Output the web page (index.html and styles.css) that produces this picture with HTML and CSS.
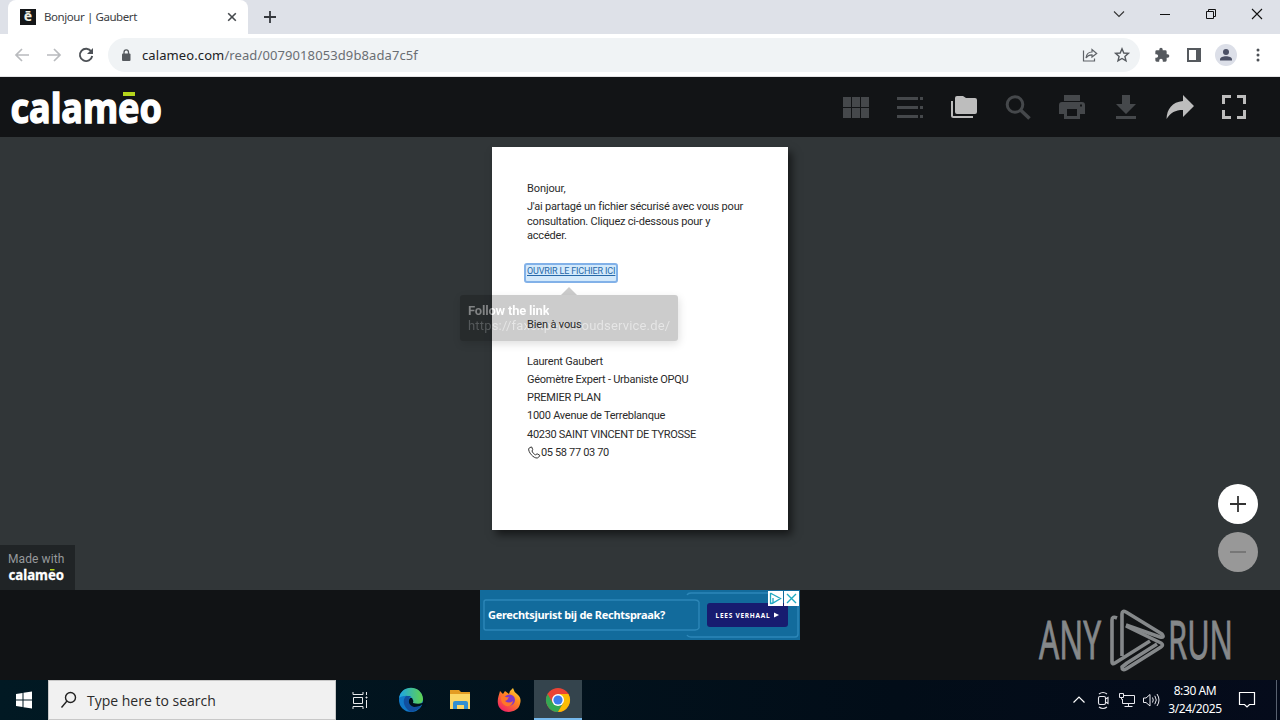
FILE: index.html
```html
<!DOCTYPE html>
<html lang="fr">
<head>
<meta charset="utf-8">
<title>Bonjour | Gaubert</title>
<link rel="stylesheet" href="styles.css">
</head>
<body>
<header class="tabstrip">
  <div class="tab">
    <span class="favicon">ē</span>
    <span class="tab-title">Bonjour | Gaubert</span>
    <svg class="tab-close" width="10" height="10" viewBox="0 0 10 10"><path d="M1.2 1.2l7.6 7.6M8.8 1.2L1.2 8.8" stroke="#45494d" stroke-width="1.6"/></svg>
  </div>
  <svg class="new-tab" width="12" height="12" viewBox="0 0 12 12"><path d="M6 0v12M0 6h12" stroke="#35383d" stroke-width="1.8"/></svg>
  <div class="window-buttons">
    <svg width="46" height="28" viewBox="0 0 46 28"><path d="M18 11.500l5 5 5-5" fill="none" stroke="#333" stroke-width="1.1"/></svg>
    <svg width="46" height="28" viewBox="0 0 46 28"><path d="M18 14.500h10" stroke="#111"/></svg>
    <svg width="46" height="28" viewBox="0 0 46 28"><path d="M18.500 11.500h7v7h-7zM20.500 11.500v-2h7v7h-2" fill="none" stroke="#111"/></svg>
    <svg width="46" height="28" viewBox="0 0 46 28"><path d="M18 9l10 10M28 9L18 19" stroke="#111" stroke-width="1.1"/></svg>
  </div>
</header>
<nav class="toolbar">
  <div class="nav-icons">
    <svg width="16" height="16" viewBox="0 0 16 16" fill="none" stroke="#b9bbbe" stroke-width="1.7"><path d="M15 8H2M8 2L2 8l6 6"/></svg>
    <svg width="16" height="16" viewBox="0 0 16 16" fill="none" stroke="#b9bbbe" stroke-width="1.7"><path d="M1 8h13M8 2l6 6-6 6"/></svg>
    <svg width="16" height="16" viewBox="0 0 16 16"><path d="M13.300 4.500A6.200 6.200 0 1 0 14.200 9" fill="none" stroke="#4d5156" stroke-width="1.9"/><path d="M15 1v6H9z" fill="#4d5156"/></svg>
  </div>
  <div class="omnibox">
    <svg width="10" height="13" viewBox="0 0 10 13"><rect x="1" y="4.500" width="8.500" height="7.500" rx="1" fill="#55595e"/><path d="M3 5V3.200a2.250 2.250 0 0 1 4.500 0V5" fill="none" stroke="#55595e" stroke-width="1.300"/></svg>
    <span class="url"><b>calameo.com</b>/read/0079018053d9b8ada7c5f</span>
    <svg class="share" width="16" height="16" viewBox="0 0 16 16" fill="none" stroke="#5f6368" stroke-width="1.200"><path d="M1.500 3.500v10.500h11v-2.500M4 11c.4-3.700 2.600-6 6-6V2.500L14.700 6.500 10 10V7.800C7.300 7.700 5.500 8.700 4 11z"/></svg>
    <svg class="star" width="16" height="16" viewBox="0 0 16 16" fill="none" stroke="#55595e" stroke-width="1.400"><path d="M8 1.800l1.800 4.200 4.600.4-3.500 3 1.100 4.500L8 11.500l-4 2.400 1.100-4.500-3.500-3L6.200 6z"/></svg>
  </div>
  <svg class="puzzle" width="16" height="16" viewBox="0 0 24 24"><path fill="#55595e" d="M20.500 11H19V7a2 2 0 0 0-2-2h-4V3.500a2.500 2.500 0 0 0-5 0V5H4a2 2 0 0 0-2 2v3.800h1.500a2.700 2.700 0 0 1 0 5.400H2V20a2 2 0 0 0 2 2h3.800v-1.500a2.700 2.700 0 0 1 5.400 0V22H17a2 2 0 0 0 2-2v-4h1.500a2.500 2.500 0 0 0 0-5z"/></svg>
  <svg class="panel" width="14" height="14" viewBox="0 0 14 14"><path fill="#55595e" fill-rule="evenodd" d="M0 0h14v14H0zM2 2v10h7V2z"/></svg>
  <svg class="avatar" width="22" height="22" viewBox="0 0 22 22"><circle cx="11" cy="11" r="11" fill="#dcdfe8"/><circle cx="11" cy="8" r="3" fill="#4b5065"/><path d="M5 16.500v-1c0-2.200 3-3.300 6-3.300s6 1.100 6 3.300v1z" fill="#4b5065"/></svg>
  <svg class="kebab" width="4" height="14" viewBox="0 0 4 14" fill="#4d5156"><circle cx="2" cy="2" r="1.500"/><circle cx="2" cy="7" r="1.500"/><circle cx="2" cy="12" r="1.500"/></svg>
</nav>

<div class="app-bar">
  <svg class="logo" width="154" height="60" viewBox="0 0 154 60"><text class="logo-text" x="0.500" y="45.500" textLength="151.500" lengthAdjust="spacingAndGlyphs">calameo</text><rect x="113" y="15" width="12" height="4" fill="#b5d51c"/></svg>
  <div class="actions">
    <svg width="54" height="36" viewBox="0 0 54 36"><path fill="#45484b" d="M14 8h8v10h-8zM23 8h8v10h-8zM32 8h8v10h-8zM14 19h8v10h-8zM23 19h8v10h-8zM32 19h8v10h-8z"/></svg>
    <svg width="54" height="36" viewBox="0 0 54 36"><path fill="#45484b" d="M14 8h21v3H14zM37 8h3v3h-3zM14 17h21v3H14zM37 17h3v3h-3zM14 26h21v3H14zM37 26h3v3h-3z"/></svg>
    <svg width="54" height="36" viewBox="0 0 54 36"><path fill="#bdbdbd" d="M18 9a2 2 0 0 1 2-2h6l3 2h9a2 2 0 0 1 2 2v12a2 2 0 0 1-2 2H20a2 2 0 0 1-2-2z"/><path d="M15 12v14.500q0 1.500 1.500 1.500H36" fill="none" stroke="#bdbdbd" stroke-width="2"/></svg>
    <svg width="54" height="36" viewBox="0 0 54 36"><circle cx="24" cy="15.500" r="7.800" fill="none" stroke="#45484b" stroke-width="3"/><path d="M29.500 21l9 8.500" stroke="#45484b" stroke-width="3.600"/></svg>
    <svg width="54" height="36" viewBox="0 0 54 36"><path fill="#45484b" fill-rule="evenodd" d="M19 6h16v6H19zM17 13h20a3 3 0 0 1 3 3v9h-5v5H19v-5h-5v-9a3 3 0 0 1 3-3zM22 20v7h10v-7zM35 15.500v2h2v-2z"/></svg>
    <svg width="54" height="36" viewBox="0 0 54 36"><path fill="#45484b" d="M23 6h8v9h6L27 25 17 15h6zM17 27h20v3H17z"/></svg>
    <svg width="54" height="36" viewBox="0 0 54 36"><path fill="#bdbdbd" d="M30 6l11 11-11 11v-7c-8 0-12 2.500-16.500 9C14 20 19 13 30 12z"/></svg>
    <svg width="54" height="36" viewBox="0 0 54 36"><path fill="none" stroke="#bdbdbd" stroke-width="3" d="M16.500 15V7.500H24M30 7.500h7.500V15M37.500 21v7.500H30M24 28.500h-7.500V21"/></svg>
  </div>
</div>

<main class="viewer">
  <article class="sheet">
    <p class="line hello">Bonjour,</p>
    <p class="intro">J'ai partagé un fichier sécurisé avec vous pour<br>consultation. Cliquez ci-dessous pour y<br>accéder.</p>
    <a class="file-link">OUVRIR LE FICHIER ICI</a>
    <p class="line regards">Bien à vous</p>
    <p class="line s1">Laurent Gaubert</p>
    <p class="line s2">Géomètre Expert - Urbaniste OPQU</p>
    <p class="line s3">PREMIER PLAN</p>
    <p class="line s4">1000 Avenue de Terreblanque</p>
    <p class="line s5">40230 SAINT VINCENT DE TYROSSE</p>
    <p class="line s6"><svg width="14" height="13" viewBox="0 0 13 13"><path d="M3.500 1L1.200 2.500C.5 6 6 12.500 9.800 12l2.400-1.800v-1L9.600 7.800 8 8.800C6.300 8.200 5 6.500 4.500 5L5.200 3.500 4.200 1z" fill="none" stroke="#333"/></svg><span>05 58 77 03 70</span></p>
    <div class="tooltip">
      <b>Follow the link</b>
      <span>https://faxexpert.cloudservice.de/</span>
    </div>
  </article>
  <div class="badge">
    <span>Made with</span>
    <svg width="58" height="18" viewBox="0 0 58 18"><text class="badge-logo" x="0.500" y="13" textLength="55.500" lengthAdjust="spacingAndGlyphs">calameo</text><rect x="42" y="2" width="4.500" height="1.500" fill="#b5d51c"/></svg>
  </div>
  <div class="zoom-controls">
    <svg width="40" height="40" viewBox="0 0 40 40"><circle cx="20" cy="20" r="20" fill="#fff"/><path d="M20 12v16M12 20h16" stroke="#333" stroke-width="1.800"/></svg>
    <svg width="40" height="40" viewBox="0 0 40 40"><circle cx="20" cy="20" r="20" fill="#989898"/><path d="M12 20h16" stroke="#777" stroke-width="2"/></svg>
  </div>
</main>

<section class="ad-band">
  <div class="ad">
    <svg class="ad-lines" width="320" height="50" viewBox="0 0 320 50" fill="none" stroke="#2d87b8" stroke-width="1.400"><path d="M219 12q-1-2-4-2H6q-2 0-2 2v26q0 2 2 2h209q3 0 4-2V12M207 5q1-2 4-2h78M207 45q1 2 4 2h104q3 0 3-3V16"/></svg>
    <span class="ad-title">Gerechtsjurist bij de Rechtspraak?</span>
    <span class="ad-button">LEES VERHAAL <svg width="5" height="6" viewBox="0 0 6 6"><path d="M0 0l6 3-6 3z" fill="#fff"/></svg></span>
    <div class="ad-choices">
      <svg width="15" height="15" viewBox="0 0 15 15"><path fill="#fff" d="M0 0h15v15H0z"/><path d="M2.500 2v11M5 3.500l7.500 4L5 12V7M2.500 2.200L5 3.500M2.500 12.800l3-1.500" fill="none" stroke="#20a9c0" stroke-width="1.300"/></svg>
      <svg width="15" height="15" viewBox="0 0 15 15"><path fill="#fff" d="M0 0h15v15H0z"/><path d="M3 3l9 9M12 3l-9 9" stroke="#20a9c0" stroke-width="1.400"/></svg>
    </div>
  </div>
  <svg class="watermark" width="200" height="70" viewBox="0 0 200 70">
    <text class="wm" x="3" y="50" textLength="62" lengthAdjust="spacingAndGlyphs">ANY</text>
    <text class="wm" x="132" y="50" textLength="65" lengthAdjust="spacingAndGlyphs">RUN</text>
    <g fill="none" stroke="#85888a" stroke-width="3.600" stroke-linejoin="round"><path d="M81 9q-5-2-5 2v42q0 3 3 1l35-22"/><path d="M86 47V5q0-4 4-2l36 22q3 4-2 3L90 16"/><path d="M90 17l35 17q3 2 0 4L90 60q-4 2-4-2l5-4 30-19"/></g>
  </svg>
</section>

<footer class="taskbar">
  <svg class="start" width="48" height="40" viewBox="0 0 48 40"><path fill="#fff" d="M16 14l6.500-1v6.500H16zM23.500 12.800l8.500-1.300v8H23.500zM16 20.500h6.500V27L16 26zM23.500 20.500H32v8l-8.500-1.300z"/></svg>
  <div class="search">
    <svg width="18" height="18" viewBox="0 0 18 18" fill="none" stroke="#222" stroke-width="1.400"><circle cx="10.500" cy="6.500" r="5"/><path d="M7 10l-5.500 6.500"/></svg>
    <span>Type here to search</span>
  </div>
  <div class="apps">
    <svg width="48" height="40" viewBox="0 0 48 40" fill="none" stroke="#e8eaec"><path d="M17 12v2.500h10V12M17.500 17.500h9v6h-9zM17 29v-2.500h10V29M30.500 12v3M30.500 20v8"/><path fill="#e8eaec" d="M30 17h1v1h-1z"/></svg>
    <svg width="52" height="40" viewBox="0 0 52 40"><defs><linearGradient id="e1" x1="0" x2="1"><stop stop-color="#1ca4e8"/><stop offset="1" stop-color="#61d44d"/></linearGradient></defs><circle cx="27" cy="20" r="12" fill="#1078c8"/><path d="M15 19C16 4 38 4 39 19c0 6-8 7-11 4 3-4-2-8-7-7-3 0-6 1-6 3z" fill="url(#e1)"/><path d="M22 16c-5 5-1 13 5 16 5-1 9-4 10-6-7 3-14-1-12-7q0-2 2-3z" fill="#114f9f"/><path d="M26 18c-3 4 0 8 4 9 4 0 7-1 8-2.500v3l4-1v-6q-5 5-13 2.500 1-2-1-5z" fill="#00111d"/></svg>
    <svg width="46" height="40" viewBox="-1 0 46 40"><path d="M13 10h9l2 2h9v4H13z" fill="#e39c23"/><path d="M13 14h20v15H13z" fill="#fbd665"/><path d="M16 29v-6q0-2 2-2h11q2 0 2 2v6h-4v-4h-7v4z" fill="#318fd0"/></svg>
    <svg width="52" height="40" viewBox="-3 0 52 40"><defs><linearGradient id="f1" x1="1" y1="0" x2=".3" y2="1"><stop stop-color="#ffe53b"/><stop offset=".45" stop-color="#ff8a1e"/><stop offset="1" stop-color="#f32463"/></linearGradient></defs><path d="M15 11l3 3 2-3 4 3 1-3 3-3q1 4 4 6 5 4 3 10c-2 10-20 11-22 0-1-5 1-9 2-13z" fill="url(#f1)"/><circle cx="24.500" cy="20" r="5.500" fill="#8137c6"/><path d="M17 15q3 3 7 2-1 3-4 4 4 3 8 0-1 6-7 5-5-2-5-8z" fill="#ff7629"/></svg>
    <div class="active-app"><svg width="48" height="38" viewBox="0 0 48 38"><circle cx="24" cy="20" r="12" fill="#eb4335"/><path d="M13.600 14A12 12 0 0 0 24 32l5.200-9-10.400 0z" fill="#34a853"/><path d="M24 14h10.400A12 12 0 0 1 24 32l5.200-9z" fill="#fbbc05"/><circle cx="24" cy="20" r="6" fill="#fff"/><circle cx="24" cy="20" r="4.600" fill="#3c7cec"/></svg></div>
  </div>
  <div class="tray">
    <svg width="24" height="40" viewBox="0 0 24 40"><path d="M6.500 22.500l5.500-5.500 5.500 5.500" fill="none" stroke="#fff" stroke-width="1.200"/></svg>
    <svg width="24" height="40" viewBox="0 0 24 40" fill="none" stroke="#e8e8ee" stroke-width="1.100"><rect x="7.500" y="16.500" width="7" height="8" rx="1.500"/><path d="M14.500 19l2.500-1.500v6L14.500 22M8 14q4-3 8 0M8 27q4 3 8 0"/></svg>
    <svg width="24" height="40" viewBox="0 0 24 40" fill="none" stroke="#e8e8ee"><path d="M9 15.500h10.500v8H7.500V19M13.500 23.500v3M9.500 26.500h8M4.500 13.500h4v4h-4zM6.500 17.500v2"/></svg>
    <svg width="24" height="40" viewBox="0 0 24 40" fill="none" stroke="#e8e8ee"><path d="M4.500 18v4.500H7l4 3.500V14.500L7 18zM13.500 17.500q1.500 2.500 0 5M15.800 15.800q3 4.200 0 8.400M18 14q4 6 0 12"/></svg>
    <div class="clock"><span>8:30 AM</span><span class="date">3/24/2025</span></div>
    <svg class="notify" width="18" height="18" viewBox="0 0 18 18" fill="none" stroke="#fff" stroke-width="1.200"><path d="M1.500 1.500h15v12h-5L9 16l-2.500-2.500h-5z"/></svg>
    <span class="peek"></span>
  </div>
</footer>
</body>
</html>
```
FILE: styles.css
```css
* { box-sizing: border-box; }
body { margin: 0; width: 1280px; height: 720px; display: flex; flex-direction: column; overflow: hidden; font-family: "Noto Sans", sans-serif; background: #111315; }
svg { display: block; flex: none; overflow: visible; }
p { margin: 0; }

.tabstrip { height: 34px; background: #dee1e8; display: flex; align-items: flex-start; }
.tab { width: 240px; height: 34px; margin-left: 8px; padding: 0 11px 0 12px; display: flex; align-items: center; background: #fff; border-radius: 8px 8px 0 0; }
.favicon { width: 16px; height: 16px; background: #141618; color: #f0f0e4; font-size: 14px; font-weight: 700; line-height: 14px; text-align: center; }
.tab-title { margin-left: 8px; font-size: 11.5px; letter-spacing: -0.42px; color: #3c4043; white-space: nowrap; position: relative; top: -1px; }
.tab-close { margin-left: auto; }
.new-tab { margin: 11px 0 0 16px; }
.window-buttons { margin-left: auto; display: flex; }

.toolbar { height: 43px; background: #fff; border-bottom: 1px solid #e4e4e6; display: flex; align-items: center; padding-left: 14px; }
.nav-icons { display: flex; gap: 16px; }
.omnibox { width: 1032px; height: 34px; margin-left: 14px; padding: 0 10px 0 13px; border-radius: 17px; background: #f0f3f5; display: flex; align-items: center; }
.url { margin-left: 11px; font-size: 13px; letter-spacing: 0.1px; color: #6a6e73; white-space: nowrap; }
.url b { font-weight: 400; color: #202124; }
.share { margin-left: auto; }
.star { margin-left: 16px; }
.puzzle { margin-left: 14px; }
.panel { margin-left: 17px; }
.avatar { margin-left: 14px; }
.kebab { margin-left: 19px; }

.app-bar { height: 60px; background: #121416; display: flex; align-items: center; padding: 0 19px 0 10px; }
.logo-text { font: 700 42px "Noto Sans", sans-serif; fill: #fff; stroke: #fff; stroke-width: 1.4; }
.actions { margin-left: auto; display: flex; }

.viewer { height: 453px; background: #313638; position: relative; display: flex; justify-content: center; align-items: flex-start; padding-top: 10px; }
.sheet { position: relative; width: 296px; height: 383px; background: #fff; box-shadow: 4px 5px 8px rgba(0, 0, 0, .55); padding: 33px 0 0 35px; font-family: Roboto, sans-serif; font-size: 11px; letter-spacing: -.2px; color: #2b2b2b; white-space: nowrap; }
.line { height: 18px; line-height: 18px; position: relative; z-index: 2; }
.hello { letter-spacing: -.1px; }
.intro { margin-top: 2px; line-height: 14.5px; height: 44px; }
.file-link { display: block; width: 94px; height: 20px; margin: 19px 0 0 -3px; padding-left: 1px; border: 2px solid #82b1e8; border-radius: 3px; background: #d3e9fb; color: #2668a8; font-size: 9px; letter-spacing: -.15px; line-height: 13px; text-decoration: underline; }
.regards { margin-top: 33px; letter-spacing: -.15px; }
.s1 { margin-top: 19px; }
.s2, .s4 { letter-spacing: -.25px; }
.s5 { margin-top: 1px; letter-spacing: -.3px; }
.s6 { display: flex; align-items: center; letter-spacing: -.35px; }
.s6 svg { margin-top: -2px; }
.tooltip { position: absolute; z-index: 1; left: -32px; top: 148px; width: 218px; height: 46px; padding: 8px; border-radius: 3px; background: rgba(0, 0, 0, .2); box-shadow: 1px 3px 8px rgba(0, 0, 0, .13); display: flex; flex-direction: column; font-size: 13px; line-height: 15px; letter-spacing: .18px; color: transparent; }
.tooltip b, .tooltip span { width: max-content; background: linear-gradient(90deg, #828485 24px, #fff 24px); background-clip: text; -webkit-background-clip: text; }
.tooltip b { font-weight: 700; letter-spacing: -.2px; }
.tooltip span { background-image: linear-gradient(90deg, #55595b 24px, #e6e6e6 24px); }
.tooltip::before { content: ""; position: absolute; left: 101px; top: -8px; border: 8px solid transparent; border-top: 0; border-bottom-color: rgba(0, 0, 0, .2); }
.badge { position: absolute; left: 0; bottom: 0; width: 75px; height: 45px; padding: 7px 8px 0; background: #202426; color: #96999b; font: 12px/14px Roboto, sans-serif; letter-spacing: .1px; white-space: nowrap; }
.badge svg { margin-top: 1px; }
.badge-logo { font: 700 14.5px "Noto Sans", sans-serif; letter-spacing: 0; fill: #fff; stroke: #fff; stroke-width: .3; }
.zoom-controls { position: absolute; right: 22px; bottom: 18px; display: flex; flex-direction: column; gap: 8px; }

.ad-band { height: 90px; background: #111315; position: relative; display: flex; justify-content: center; }
.ad { position: relative; width: 320px; height: 50px; background: #126b9c; display: flex; align-items: center; padding: 0 12px 0 8px; color: #fff; }
.ad-lines { position: absolute; left: 0; top: 0; }
.ad-title { font-size: 11px; font-weight: 700; letter-spacing: -.3px; white-space: nowrap; position: relative; top: -1px; }
.ad-button { position: relative; margin-left: auto; width: 81px; height: 24px; border-radius: 3px; background: #171c70; display: flex; align-items: center; justify-content: center; gap: 4px; font-size: 6.5px; font-weight: 700; letter-spacing: .75px; white-space: nowrap; }
.ad-choices { position: absolute; right: 1px; top: 1px; display: flex; gap: 1px; }
.watermark { position: absolute; left: 1036px; top: 19px; }
.wm { font: 52px "Noto Sans", sans-serif; fill: #85888a; stroke: #85888a; stroke-width: .9; }

.taskbar { height: 40px; background: linear-gradient(90deg, #011923, #020d18 70%, #050b1b); display: flex; }
.search { width: 288px; height: 40px; background: #f1f1f1; border: 1px solid #c8c8c8; display: flex; align-items: center; padding-left: 11px; color: #2b2b2b; font-family: "Open Sans", sans-serif; font-size: 14px; }
.search span { margin-left: 9px; white-space: nowrap; }
.apps { display: flex; }
.active-app { width: 48px; height: 40px; background: #34444d; border-bottom: 2px solid #76b9ed; }
.tray { margin-left: auto; display: flex; align-items: center; color: #fff; }
.clock { width: 64px; display: flex; flex-direction: column; align-items: center; font-size: 12px; line-height: 18px; white-space: nowrap; letter-spacing: -.4px; }
.notify { margin-left: 11px; }
.peek { width: 1px; height: 40px; margin: 0 3px 0 20px; background: #596170; }
```
